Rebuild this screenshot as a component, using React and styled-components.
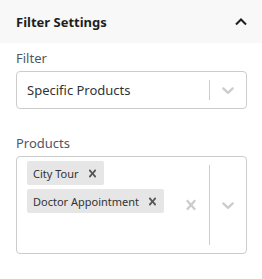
import React from 'react';
import styled, { createGlobalStyle } from 'styled-components';

const GlobalStyle = createGlobalStyle`
  body {
    margin: 0;
    background: #fff;
    font-family: "Noto Sans", "Open Sans", sans-serif;
    color: #1e1e1e;
  }
`;

const Panel = styled.div`
  width: 262px;
  height: 279px;
  background: #fff;
`;

const Header = styled.div`
  height: 43px;
  display: flex;
  align-items: center;
  justify-content: space-between;
  padding: 0 14px 0 16px;
  background: #f8f8f8;
`;

const Title = styled.h2`
  margin: 0;
  font-size: 13px;
  font-weight: 700;
  color: #1e1e1e;
`;

const Body = styled.div`
  padding: 6px 15px 0 16px;
  display: flex;
  flex-direction: column;
`;

const Field = styled.div`
  display: flex;
  flex-direction: column;
  margin-bottom: ${({ spacing }) => spacing || 0}px;
`;

const Label = styled.label`
  font-size: 13px;
  line-height: 18px;
  color: #50575e;
  margin-bottom: 4px;
`;

const Control = styled.div`
  display: flex;
  min-height: ${({ tall }) => (tall ? 98 : 38)}px;
  box-sizing: border-box;
  border: 1px solid #cccccc;
  border-radius: 4px;
  background: #fff;
`;

const ValueContainer = styled.div`
  flex: 1;
  min-width: 0;
  display: flex;
  flex-wrap: wrap;
  align-items: ${({ multi }) => (multi ? 'flex-start' : 'center')};
  align-content: ${({ multi }) => (multi ? 'flex-start' : 'center')};
  padding: ${({ multi }) => (multi ? '2px 8px' : '2px 10px')};
`;

const SingleValue = styled.span`
  font-size: 13px;
  color: #333;
`;

const Tag = styled.div`
  display: flex;
  align-items: center;
  height: 24px;
  margin: 2px;
  background: #e6e6e6;
  border-radius: 2px;
  font-size: 11px;
  color: #333;
  white-space: nowrap;
`;

const TagLabel = styled.span`
  padding: 0 6px;
`;

const TagRemove = styled.span`
  display: flex;
  align-items: center;
  padding: 0 4px 0 0;
  color: #555;
`;

const Indicators = styled.div`
  display: flex;
  align-items: center;
  align-self: stretch;
`;

const Separator = styled.span`
  align-self: stretch;
  width: 1px;
  margin: 8px 0;
  background: #cccccc;
`;

const Indicator = styled.div`
  display: flex;
  padding: 8px;
  color: #cccccc;
`;

const Chevron = ({ size = 20 }) => (
  <svg width={size} height={size} viewBox="0 0 20 20" fill="currentColor">
    <path d="M4.516 7.548c0.436-0.446 1.043-0.481 1.576 0l3.908 3.747 3.908-3.747c0.533-0.481 1.141-0.446 1.574 0 0.436 0.445 0.408 1.197 0 1.615-0.406 0.418-4.695 4.502-4.695 4.502-0.217 0.223-0.502 0.335-0.787 0.335s-0.57-0.112-0.789-0.335c0 0-4.287-4.084-4.695-4.502s-0.436-1.17 0-1.615z" />
  </svg>
);

const Cross = ({ size = 20 }) => (
  <svg width={size} height={size} viewBox="0 0 20 20" fill="currentColor">
    <path d="M14.348 14.849c-0.469 0.469-1.229 0.469-1.697 0l-2.651-3.030-2.651 3.029c-0.469 0.469-1.229 0.469-1.697 0-0.469-0.469-0.469-1.229 0-1.697l2.758-3.15-2.759-3.152c-0.469-0.469-0.469-1.228 0-1.697s1.228-0.469 1.697 0l2.652 3.031 2.651-3.031c0.469-0.469 1.228-0.469 1.697 0s0.469 1.229 0 1.697l-2.758 3.152 2.758 3.15c0.469 0.469 0.469 1.229 0 1.698z" />
  </svg>
);

const products = ['City Tour', 'Doctor Appointment'];

const App = () => (
  <Panel>
    <GlobalStyle />
    <Header>
      <Title>Filter Settings</Title>
      <svg width="14" height="14" viewBox="0 0 14 14">
        <polyline points="2,9.5 7,4.5 12,9.5" fill="none" stroke="#1e1e1e" strokeWidth="2" />
      </svg>
    </Header>
    <Body>
      <Field spacing={25}>
        <Label>Filter</Label>
        <Control>
          <ValueContainer>
            <SingleValue>Specific Products</SingleValue>
          </ValueContainer>
          <Indicators>
            <Separator />
            <Indicator>
              <Chevron />
            </Indicator>
          </Indicators>
        </Control>
      </Field>
      <Field>
        <Label>Products</Label>
        <Control tall>
          <ValueContainer multi>
            {products.map((p) => (
              <Tag key={p}>
                <TagLabel>{p}</TagLabel>
                <TagRemove>
                  <Cross size={15} />
                </TagRemove>
              </Tag>
            ))}
          </ValueContainer>
          <Indicators>
            <Indicator>
              <Cross />
            </Indicator>
            <Separator />
            <Indicator>
              <Chevron />
            </Indicator>
          </Indicators>
        </Control>
      </Field>
    </Body>
  </Panel>
);

export default App;
